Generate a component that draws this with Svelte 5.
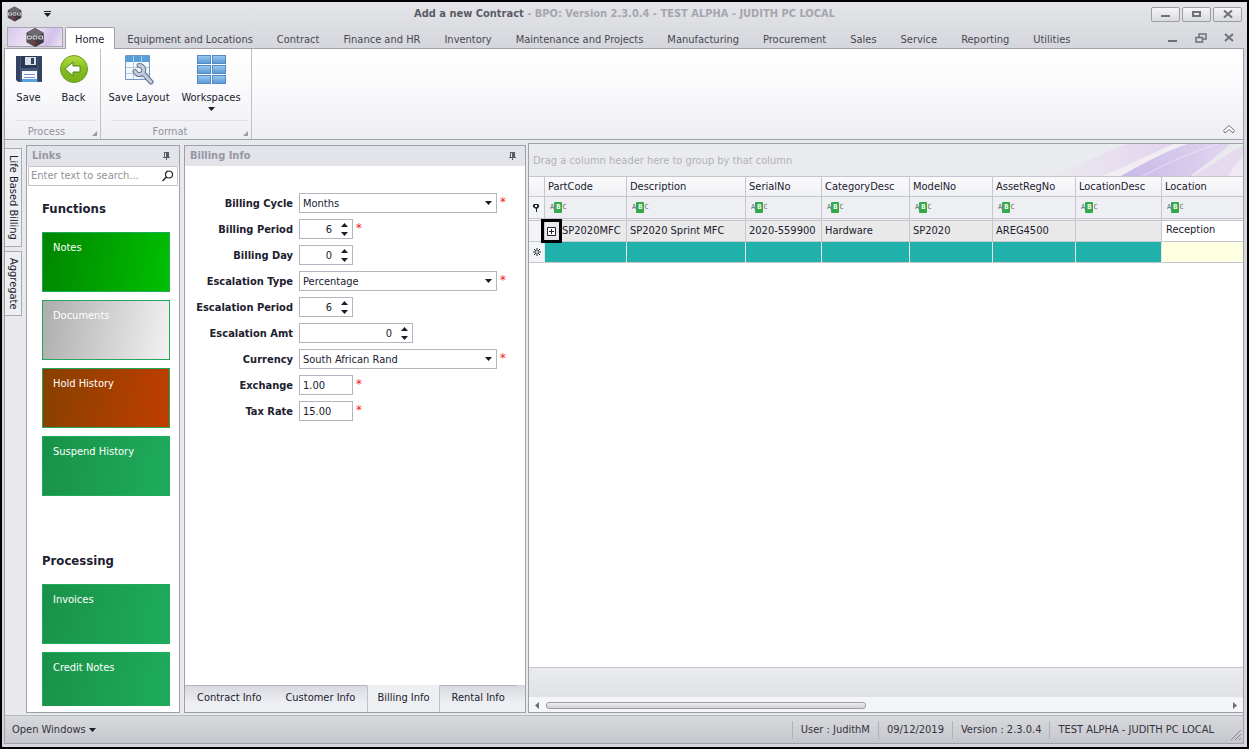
<script>
  const menuTabs = [
    'Home',
    'Equipment and Locations',
    'Contract',
    'Finance and HR',
    'Inventory',
    'Maintenance and Projects',
    'Manufacturing',
    'Procurement',
    'Sales',
    'Service',
    'Reporting',
    'Utilities'
  ];

  const functionLinks = [
    { name: 'Notes', tone: 'bright' },
    { name: 'Documents', tone: 'silver' },
    { name: 'Hold History', tone: 'rust' },
    { name: 'Suspend History', tone: 'green' }
  ];

  const processingLinks = ['Invoices', 'Credit Notes'];
  const infoTabs = ['Contract Info', 'Customer Info', 'Billing Info', 'Rental Info'];

  let fields = [
    { id: 'cycle', label: 'Billing Cycle', type: 'select', value: 'Months', options: ['Days', 'Months', 'Years'], required: true },
    { id: 'period', label: 'Billing Period', type: 'spin', value: 6, required: true },
    { id: 'day', label: 'Billing Day', type: 'spin', value: 0 },
    { id: 'esc-type', label: 'Escalation Type', type: 'select', value: 'Percentage', options: ['Percentage', 'Amount'], required: true },
    { id: 'esc-period', label: 'Escalation Period', type: 'spin', value: 6 },
    { id: 'esc-amt', label: 'Escalation Amt', type: 'spin', value: 0, wide: true },
    { id: 'currency', label: 'Currency', type: 'select', value: 'South African Rand', options: ['South African Rand', 'US Dollar'], required: true },
    { id: 'exchange', label: 'Exchange', type: 'text', value: '1.00', required: true },
    { id: 'tax', label: 'Tax Rate', type: 'text', value: '15.00', required: true }
  ];

  const columns = ['PartCode', 'Description', 'SerialNo', 'CategoryDesc', 'ModelNo', 'AssetRegNo', 'LocationDesc', 'Location'];
  const row = ['SP2020MFC', 'SP2020 Sprint MFC', '2020-559900', 'Hardware', 'SP2020', 'AREG4500', '', 'Reception'];
  const statusItems = ['User : JudithM', '09/12/2019', 'Version : 2.3.0.4', 'TEST ALPHA - JUDITH PC LOCAL'];

  let activeMenu = 'Home';
  let activeInfo = 'Billing Info';
  let search = '';

  function step(field, amount) {
    field.value = Number(field.value) + amount;
    fields = fields;
  }
</script>

{#snippet hexLogo()}
  <svg class="hex" viewBox="0 0 20 20" aria-hidden="true">
    <path d="M10 0 19 5V15L10 20 1 15V5Z" fill="#504e52" />
    <path d="M10 0 19 5 10 9 1 5Z" fill="#6c6a6e" />
    <path d="M10 10 19 6V15L10 20Z" fill="#3d3b3f" />
    <path d="M2 8.500h4v3H2zM8 11.500v-3h4v3zM14 11.500v-3h4v3z" fill="none" stroke="#e6e6ea" />
    <path d="M5 14h2l1 2h3l-1-2" fill="none" stroke="#a92835" />
  </svg>
{/snippet}

{#snippet pin()}
  <svg width="9" height="8" viewBox="0 0 9 8" aria-hidden="true">
    <path d="M2 .5h5M2.500 0v5M1 5.500h7M4.500 6v2" stroke="#5c5c66" fill="none" />
    <path d="M4 0h3v5H4z" fill="#5c5c66" />
  </svg>
{/snippet}

{#snippet arrow(up)}
  <svg width="7" height="4" viewBox="0 0 7 4" aria-hidden="true">
    <path d={up ? 'M0 4h7L3.5 0z' : 'M0 0h7L3.5 4z'} fill="#1b1b2b" />
  </svg>
{/snippet}

{#snippet corner()}
  <svg class="launcher" width="5" height="5" viewBox="0 0 5 5" aria-hidden="true"><path d="M5 0v5H0z" fill="#9b9ba4" /></svg>
{/snippet}

<div class="window">
  <header class="titlebar">
    <div class="quick">
      {@render hexLogo()}
      <button aria-label="Customize quick access">
        <svg width="7" height="6" viewBox="0 0 7 6"><path d="M0 .5h7" stroke="#1b1b2b" /><path d="M0 2h7L3.5 6z" fill="#1b1b2b" /></svg>
      </button>
    </div>
    <h1>Add a new Contract <span>- BPO: Version 2.3.0.4 - TEST ALPHA - JUDITH PC LOCAL</span></h1>
    <div class="window-buttons">
      <button aria-label="Minimize"><svg width="10" height="8" viewBox="0 0 10 8"><path d="M0 6h9" stroke="#70707a" stroke-width="2" /></svg></button>
      <button aria-label="Maximize"><svg width="10" height="8" viewBox="0 0 10 8"><path d="M1 2h7v4H1z" fill="none" stroke="#70707a" stroke-width="2" /></svg></button>
      <button aria-label="Close"><svg width="10" height="8" viewBox="0 0 10 8"><path d="m1 .5 8 7M9 .5l-8 7" stroke="#70707a" stroke-width="2" /></svg></button>
    </div>
  </header>

  <nav class="menu">
    <button class="app-button" aria-label="Application menu">{@render hexLogo()}</button>
    {#each menuTabs as tab}
      <button class="menu-tab" class:active={activeMenu === tab} on:click={() => (activeMenu = tab)}>{tab}</button>
    {/each}
    <div class="child-buttons">
      <button aria-label="Minimize document"><svg width="10" height="10" viewBox="0 0 10 10"><path d="M0 8h9" stroke="#70707a" stroke-width="2" /></svg></button>
      <button aria-label="Restore document"><svg width="12" height="10" viewBox="0 0 12 10"><path d="M4 4V1h7v5H8M1 4.5h6.5V9H1z" fill="none" stroke="#70707a" stroke-width="1.5" /></svg></button>
      <button aria-label="Close document"><svg width="10" height="10" viewBox="0 0 10 10"><path d="m1 1 8 7M9 1 1 8" stroke="#70707a" stroke-width="2" /></svg></button>
    </div>
  </nav>

  <div class="frame">
    <section class="ribbon">
      <div class="group">
        <div class="group-buttons">
          <button>
            <svg width="28" height="28" viewBox="0 0 28 28" aria-hidden="true">
              <path d="M1 1h25l1 1v25H3l-2-2z" fill="#43577c" />
              <path d="M1 1h4v25H3l-2-2zM23 1h4v25h-4z" fill="#32425f" />
              <path d="M6 1h16v12H6z" fill="#2c3850" />
              <path d="M10 2h11v8H10z" fill="#d9e0e9" />
              <path d="M16 3h3v6h-3z" fill="#33415a" />
              <path d="M7 16h15v11H7z" fill="#f7fafc" />
              <path d="M7 24h15v3H7z" fill="#56a4e0" />
              <path d="M9 19.5h11M9 22.5h11" stroke="#7b92bd" />
            </svg>
            <span>Save</span>
          </button>
          <button>
            <svg width="28" height="28" viewBox="0 0 28 28" aria-hidden="true">
              <defs>
                <linearGradient id="back-fill" x2="0" y2="1"><stop stop-color="#b5dd42" /><stop offset=".5" stop-color="#85bd1d" /><stop offset="1" stop-color="#76b01c" /></linearGradient>
              </defs>
              <circle cx="14" cy="14" r="13.5" fill="url(#back-fill)" stroke="#6c9b26" />
              <path d="m5 14 8-7v4h7v6h-7v4z" fill="#fff" stroke="#4f8415" />
            </svg>
            <span>Back</span>
          </button>
        </div>
        <div class="group-name">Process{@render corner()}</div>
      </div>
      <div class="group wide">
        <div class="group-buttons">
          <button>
            <svg width="29" height="30" viewBox="0 0 29 30" aria-hidden="true">
              <path d="M.5.5h24v24H.5z" fill="#f3f8fd" stroke="#7597c4" />
              <path d="M1 1h23v6H1z" fill="#57a0dc" />
              <path d="M1 12.5h23M1 18.5h23M8.5 1v23M16.5 1v23" stroke="#b5c9e2" />
              <g fill="none" stroke-linecap="round">
                <path d="M14 10.500a4.500 4.500 0 1 1-4 6M18 18l8 9" stroke="#63718d" stroke-width="5" />
                <path d="M14 10.500a4.500 4.500 0 1 1-4 6M18 18l8 9" stroke="#c3cad8" stroke-width="3" />
              </g>
            </svg>
            <span>Save Layout</span>
          </button>
          <button>
            <svg width="29" height="29" viewBox="0 0 29 29" aria-hidden="true">
              <defs>
                <linearGradient id="pane-fill" x2="0" y2="1"><stop stop-color="#9acaf0" /><stop offset="1" stop-color="#5798d6" /></linearGradient>
              </defs>
              {#each [0, 10, 20] as y}
                <rect x=".5" y={y + 0.5} width="13" height="8" fill="url(#pane-fill)" stroke="#5488c0" />
                <rect x="15.5" y={y + 0.5} width="13" height="8" fill="url(#pane-fill)" stroke="#5488c0" />
              {/each}
            </svg>
            <span>Workspaces</span>
            {@render arrow(false)}
          </button>
        </div>
        <div class="group-name">Format{@render corner()}</div>
      </div>
      <button class="collapse" aria-label="Collapse ribbon">
        <svg width="12" height="9" viewBox="0 0 12 9"><path d="M.5 5.500 6 .5l5.500 5L10 8 6 4.500 2 8z" fill="#fff" stroke="#70707a" /></svg>
      </button>
    </section>

    <main class="workspace">
      <div class="side-tabs">
        <button>Life Based Billing</button>
        <button>Aggregate</button>
      </div>

      <aside class="panel links">
        <h2 class="panel-title">Links {@render pin()}</h2>
        <label class="search">
          <input type="text" aria-label="Search links" placeholder="Enter text to search..." bind:value={search} />
          <svg width="12" height="12" viewBox="0 0 12 12" aria-hidden="true"><circle cx="7" cy="4.500" r="3.500" fill="none" stroke="#222230" stroke-width="1.200" /><path d="m4.500 7-4 4" stroke="#222230" stroke-width="1.500" /></svg>
        </label>
        <div class="link-list">
          <h3>Functions</h3>
          {#each functionLinks as link}
            <button class="tile {link.tone}">{link.name}</button>
          {/each}
          <h3 class="later">Processing</h3>
          {#each processingLinks as name}
            <button class="tile green">{name}</button>
          {/each}
        </div>
      </aside>

      <section class="panel billing">
        <h2 class="panel-title">Billing Info {@render pin()}</h2>
        <form on:submit|preventDefault>
          {#each fields as field}
            <div class="field">
              <label for={field.id}>{field.label}</label>
              {#if field.type === 'select'}
                <div class="box select">
                  <select id={field.id} bind:value={field.value}>
                    {#each field.options as option}
                      <option>{option}</option>
                    {/each}
                  </select>
                  {@render arrow(false)}
                </div>
              {:else if field.type === 'spin'}
                <div class="box spin" class:wide={field.wide}>
                  <input id={field.id} type="text" bind:value={field.value} />
                  <div class="steps">
                    <button type="button" aria-label="Increase {field.label}" on:click={() => step(field, 1)}>{@render arrow(true)}</button>
                    <button type="button" aria-label="Decrease {field.label}" on:click={() => step(field, -1)}>{@render arrow(false)}</button>
                  </div>
                </div>
              {:else}
                <div class="box"><input id={field.id} type="text" bind:value={field.value} /></div>
              {/if}
              {#if field.required}<span class="required">*</span>{/if}
            </div>
          {/each}
        </form>
        <div class="info-tabs">
          {#each infoTabs as tab}
            <button class:active={activeInfo === tab} on:click={() => (activeInfo = tab)}>{tab}</button>
          {/each}
        </div>
      </section>

      <section class="grid">
        <div class="group-panel">
          <span>Drag a column header here to group by that column</span>
          <svg width="260" height="32" viewBox="0 0 260 32" aria-hidden="true">
            <defs>
              <linearGradient id="haze" x1="0" x2="1"><stop stop-color="#e6c9ef" stop-opacity="0" /><stop offset="1" stop-color="#dfc8ee" /></linearGradient>
              <linearGradient id="violet" x1="0" x2="1"><stop stop-color="#b9a2e4" /><stop offset="1" stop-color="#dccdf0" /></linearGradient>
            </defs>
            <path d="M60 32C95 24 120 8 145 0h50C180 12 155 25 138 32z" fill="url(#haze)" opacity=".7" />
            <path d="M118 32C145 22 172 8 190 0h15c-22 14-42 25-61 32z" fill="#f0eef3" />
            <path d="M138 32C165 17 185 6 205 0h42c-13 12-28 23-39 32z" fill="url(#violet)" opacity=".7" />
            <path d="M160 32c27-14 48-24 75-32M208 32 250 0" stroke="#e9e0f4" fill="none" />
            <path d="M210 32 260 1v31z" fill="#e3d4ec" opacity=".7" />
            <path d="M245 32 260 10v22z" fill="#f0e8f4" />
          </svg>
        </div>
        <div class="table-area">
          <table>
            <colgroup>
              <col class="c-mark" /><col class="c-part" /><col class="c-desc" /><col class="c-serial" /><col class="c-cat" /><col class="c-model" /><col class="c-asset" /><col class="c-locdesc" /><col />
            </colgroup>
            <thead>
              <tr>
                <th aria-label="Row state"></th>
                {#each columns as column}<th>{column}</th>{/each}
              </tr>
            </thead>
            <tbody>
              <tr class="filter">
                <td class="mark"><svg width="7" height="8" viewBox="0 0 7 8" aria-hidden="true"><path d="M1 0h4l1 1v2L4 5v3H3V5L0 3V1z" fill="#222230" /><path d="M2 1h2v2H2z" fill="#fff" /></svg></td>
                {#each columns as column}
                  <td><span class="abc" aria-label="Filter {column}"><i>A</i><b>B</b><i>C</i></span></td>
                {/each}
              </tr>
              <tr class="data">
                <td class="mark"></td>
                {#each row as cell, i}
                  <td>
                    {#if i === 0}
                      <button class="expand" aria-label="Expand row"><svg width="9" height="9" viewBox="0 0 9 9"><path d="M.5.5h8v8h-8zM2 4.500h5M4.500 2v5" fill="#fff" stroke="#222230" /></svg></button>
                    {/if}
                    {cell}
                  </td>
                {/each}
              </tr>
              <tr class="new">
                <td class="mark"><svg width="8" height="8" viewBox="0 0 8 8" aria-hidden="true"><path d="M4 0v8M0 4h8M1 1l6 6M7 1 1 7" stroke="#222230" /><circle cx="4" cy="4" r="1" fill="#fff" /></svg></td>
                {#each columns as _}<td></td>{/each}
              </tr>
            </tbody>
          </table>
        </div>
        <div class="grid-footer"></div>
        <div class="scrollbar">
          <button aria-label="Scroll left"><svg width="4" height="7" viewBox="0 0 4 7"><path d="M4 0v7L0 3.500z" fill="#6b6b76" /></svg></button>
          <div class="track"><div class="thumb"></div></div>
          <button aria-label="Scroll right"><svg width="4" height="7" viewBox="0 0 4 7"><path d="M0 0v7l4-3.500z" fill="#6b6b76" /></svg></button>
        </div>
      </section>
    </main>

    <footer class="status">
      <button>Open Windows {@render arrow(false)}</button>
      <div class="status-items">
        {#each statusItems as item}<span>{item}</span>{/each}
      </div>
      <svg class="grip" width="12" height="12" viewBox="0 0 12 12" aria-hidden="true"><path d="M1 11 11 1M5 11l6-6M9 11l2-2" stroke="#85858f" /></svg>
    </footer>
  </div>
</div>

<style>
  :global(body) {
    background: #000;
  }

  .window {
    --line: #a0a0ab;
    --ink: #20202f;
    box-sizing: border-box;
    display: flex;
    flex-direction: column;
    height: 100vh;
    padding: 0 3px 3px 2px;
    border: 2px solid #000;
    background: linear-gradient(#e4e5e9, #d5d6db 48px);
    color: var(--ink);
    font: 11px/14px "DejaVu Sans Condensed", "DejaVu Sans", Tahoma, sans-serif;
  }

  .window * {
    box-sizing: border-box;
  }

  button,
  input,
  select {
    margin: 0;
    padding: 0;
    border: 0;
    border-radius: 0;
    background: none;
    color: inherit;
    font: inherit;
  }

  svg {
    display: block;
    flex: none;
  }

  h1,
  h2,
  h3 {
    margin: 0;
    font-size: 11px;
    font-weight: bold;
  }

  .titlebar {
    display: grid;
    grid-template-columns: 1fr auto 1fr;
    align-items: center;
    flex: none;
    height: 24px;
    padding: 0 2px 0 3px;
  }

  .titlebar h1 {
    color: #5b5b66;
  }

  .titlebar h1 span {
    color: #a6a6ae;
  }

  .quick {
    display: flex;
    align-items: center;
    gap: 22px;
  }

  .hex {
    width: 15px;
    height: 16px;
  }

  .window-buttons {
    display: flex;
    justify-content: flex-end;
    gap: 2px;
  }

  .window-buttons button {
    display: flex;
    align-items: center;
    justify-content: center;
    width: 29px;
    height: 15px;
    border: 1px solid #9d9da6;
    border-radius: 2px;
    background: linear-gradient(#f6f6f8, #d9dade);
  }

  .menu {
    display: flex;
    flex: none;
    height: 23px;
    margin-bottom: -1px;
    padding: 1px 1px 0 3px;
    position: relative;
  }

  .app-button {
    display: flex;
    align-items: center;
    justify-content: center;
    width: 56px;
    height: 20px;
    margin-right: 2px;
    border: 1px solid #a8a5b5;
    background: linear-gradient(120deg, #d8c9ec, #ede2f4 45%, #d2c0ea 75%, #eee3f6);
  }

  .app-button .hex {
    width: 20px;
    height: 19px;
  }

  .menu-tab {
    height: 22px;
    padding: 2px 11px 0;
    border: 1px solid transparent;
    border-bottom: 0;
    color: #484852;
    white-space: nowrap;
  }

  .menu-tab.active {
    padding: 2px 10px 0 9px;
    border-color: var(--line);
    border-radius: 2px 2px 0 0;
    background: #fff;
    color: var(--ink);
  }

  .child-buttons {
    display: flex;
    align-items: center;
    gap: 17px;
    margin-left: auto;
    padding-right: 9px;
  }

  .frame {
    display: flex;
    flex: 1;
    flex-direction: column;
    min-height: 0;
    border: 1px solid var(--line);
  }

  .ribbon {
    display: flex;
    flex: none;
    height: 91px;
    border-bottom: 1px solid var(--line);
    background: linear-gradient(#fff, #fafafc 45%, #edeef2);
  }

  .group {
    display: flex;
    flex-direction: column;
    width: 96px;
    border-right: 1px solid #bfc0c8;
  }

  .group.wide {
    width: 151px;
  }

  .group-buttons {
    display: flex;
    flex: 1;
    padding: 6px 0 0 1px;
  }

  .group-buttons button {
    display: grid;
    grid-template-rows: 36px 16px 4px;
    align-content: start;
    align-items: start;
    justify-items: center;
    width: 45px;
    white-space: nowrap;
  }

  .wide .group-buttons {
    padding-left: 2px;
  }

  .wide .group-buttons button {
    width: 72px;
  }

  .group-name {
    height: 19px;
    margin: 0 4px 0 10px;
    padding: 4px 18px 0 0;
    border-top: 1px solid #e0e1e6;
    position: relative;
    color: #93939d;
    text-align: center;
  }

  .launcher {
    position: absolute;
    right: -1px;
    bottom: 3px;
  }

  .collapse {
    align-self: flex-end;
    margin: 0 8px 5px auto;
  }

  .workspace {
    display: flex;
    flex: 1;
    min-height: 0;
    padding: 3px 0 2px;
    background: #e8e9ed;
  }

  .side-tabs {
    display: flex;
    flex-direction: column;
    gap: 4px;
    flex: none;
    width: 21px;
    padding-top: 5px;
  }

  .side-tabs button {
    width: 17px;
    padding: 6px 0;
    border: 1px solid #aaaab4;
    border-left: 0;
    background: #eeeff2;
    writing-mode: vertical-rl;
  }

  .panel {
    display: flex;
    flex: none;
    flex-direction: column;
    margin-top: 2px;
    border: 1px solid var(--line);
    background: #fff;
  }

  .panel-title {
    display: flex;
    align-items: center;
    justify-content: space-between;
    flex: none;
    height: 20px;
    padding: 0 8px 0 5px;
    background: #e3e4e9;
    color: #9797a2;
  }

  .links {
    width: 154px;
    margin-right: 4px;
  }

  .search {
    display: flex;
    align-items: center;
    flex: none;
    height: 20px;
    margin: 0 1px;
    padding: 0 3px 0 2px;
    border: 1px solid #c3c4cc;
  }

  .search input {
    flex: 1;
    min-width: 0;
    outline: none;
  }

  .search input::placeholder {
    color: #92929c;
    opacity: 1;
  }

  .link-list {
    display: flex;
    flex: 1;
    flex-direction: column;
    gap: 8px;
    min-height: 0;
    margin-bottom: 6px;
    padding: 15px 9px 0 15px;
    overflow: hidden;
  }

  .link-list h3 {
    flex: none;
    height: 16px;
    margin-bottom: 7px;
    font-size: 13px;
    line-height: 16px;
  }

  .link-list .later {
    margin-top: 49px;
  }

  .tile {
    display: flex;
    flex: none;
    height: 60px;
    padding: 8px 10px;
    border: 1px solid #1faa5b;
    color: #fff;
  }

  .bright {
    background: linear-gradient(100deg, #008500, #00c000);
  }

  .silver {
    background: linear-gradient(100deg, #adadad, #f2f2f2);
  }

  .rust {
    background: linear-gradient(100deg, #864000, #c03e00);
  }

  .green {
    background: linear-gradient(100deg, #199248, #1eac5c);
  }

  .billing {
    width: 342px;
    margin-right: 2px;
  }

  form {
    display: flex;
    flex: 1;
    flex-direction: column;
    gap: 6px;
    padding: 27px 18px 0 0;
  }

  .field {
    display: flex;
    height: 20px;
  }

  .field label {
    width: 108px;
    margin-right: 6px;
    padding-top: 4px;
    font-weight: bold;
    text-align: right;
  }

  .box {
    display: flex;
    align-items: center;
    width: 54px;
    height: 20px;
    border: 1px solid #b4b5be;
    background: #fff;
  }

  .box.select {
    width: 198px;
    padding-right: 4px;
  }

  .box.wide {
    width: 114px;
  }

  .box input,
  .box select {
    flex: 1;
    width: 100%;
    min-width: 0;
    padding: 1px 0 0 3px;
    appearance: none;
    outline: none;
  }

  .spin input {
    text-align: right;
  }

  .steps {
    display: flex;
    flex-direction: column;
    gap: 5px;
    margin: 0 4px 0 9px;
  }

  .steps button {
    display: block;
  }

  .required {
    margin-left: 3px;
    padding-top: 2px;
    color: #f01822;
    font-size: 13px;
  }

  .info-tabs {
    display: flex;
    flex: none;
    height: 27px;
    background: linear-gradient(#d8d9df, #eeeff2 18px);
  }

  .info-tabs button {
    padding: 0 12px 2px;
    border-top: 1px solid #b3b4bd;
    white-space: nowrap;
  }

  .info-tabs .active {
    padding: 0 9px 2px;
    border: 1px solid #c0c1ca;
    border-top-color: #eeeff2;
    border-bottom: 0;
    background: #eeeff2;
  }

  .grid {
    display: flex;
    flex: 1;
    flex-direction: column;
    min-width: 0;
    border: 1px solid var(--line);
    border-right-width: 0;
  }

  .group-panel {
    display: flex;
    align-items: center;
    justify-content: space-between;
    flex: none;
    height: 32px;
    padding-left: 4px;
    background: #eaebee;
    color: #b1b1b9;
    white-space: nowrap;
  }

  .group-panel span {
    padding-top: 2px;
  }

  .table-area {
    flex: 1;
    min-height: 0;
    overflow: hidden;
    background: #fff;
  }

  table {
    width: 100%;
    border-spacing: 0;
    table-layout: fixed;
  }

  .c-mark {
    width: 16px;
  }

  .c-part {
    width: 82px;
  }

  .c-desc {
    width: 119px;
  }

  .c-serial {
    width: 76px;
  }

  .c-cat {
    width: 88px;
  }

  .c-model,
  .c-asset {
    width: 83px;
  }

  .c-locdesc {
    width: 86px;
  }

  th,
  td {
    height: 21px;
    padding: 0 3px;
    border: 0 solid #c5c6cf;
    border-width: 0 1px 1px 0;
    font-weight: normal;
    text-align: left;
    white-space: nowrap;
  }

  th:last-child,
  td:last-child {
    border-right: 0;
  }

  th {
    border-top-width: 1px;
    background: linear-gradient(#fafafb, #f0f1f4);
  }

  .filter td {
    height: 24px;
    border-bottom: 3px double #c5c6cf;
    background: #eeeff2;
  }

  td.mark {
    padding: 0 4px;
    background: #f3f4f6;
  }

  .abc {
    display: flex;
    align-items: center;
    margin-left: 2px;
    color: #666670;
    font: bold 7px/11px "DejaVu Sans Mono", monospace;
  }

  .abc i {
    font-style: normal;
    font-weight: normal;
  }

  .abc b {
    padding: 0 2px;
    border-radius: 1px;
    background: #36a849;
    color: #fff;
  }

  .data td {
    background: #e9e9e9;
  }

  .data td:nth-child(2) {
    padding-left: 17px;
    position: relative;
  }

  .data td:last-child {
    padding: 0 3px 3px 4px;
    background: #fff;
  }

  .expand {
    display: grid;
    place-items: center;
    width: 21px;
    height: 24px;
    border: 3px solid #000;
    position: absolute;
    top: -2px;
    left: -4px;
    z-index: 1;
  }

  .data .mark,
  .new .mark {
    background: #f3f4f6;
  }

  .new td {
    border-right-color: #e4e5e9;
    background: #20b2aa;
  }

  .new td:last-child {
    background: #ffffe1;
  }

  .grid-footer {
    flex: none;
    height: 30px;
    border-top: 1px solid #c5c6cf;
    background: linear-gradient(#eaebee, #e1e2e6);
  }

  .scrollbar {
    display: flex;
    align-items: center;
    flex: none;
    gap: 7px;
    height: 15px;
    padding: 1px 6px 0;
    background: #f4f5f7;
  }

  .track {
    flex: 1;
  }

  .thumb {
    width: 47%;
    height: 7px;
    border: 1px solid #9b9ca6;
    border-radius: 3px;
    background: linear-gradient(#ececf0, #d2d3d9);
  }

  .status {
    display: flex;
    align-items: center;
    flex: none;
    height: 28px;
    padding-left: 7px;
    border-top: 1px solid #b6b7c0;
    background: linear-gradient(#d8d9dd, #c6c7cc);
    color: #333340;
    white-space: nowrap;
  }

  .status button {
    display: flex;
    align-items: center;
    gap: 3px;
  }

  .status-items {
    display: flex;
    margin-left: auto;
  }

  .status-items span {
    padding: 2px 8px;
    border-left: 1px solid #aeafb8;
  }

  .grip {
    align-self: flex-end;
    margin: 0 1px 2px 8px;
  }
</style>
